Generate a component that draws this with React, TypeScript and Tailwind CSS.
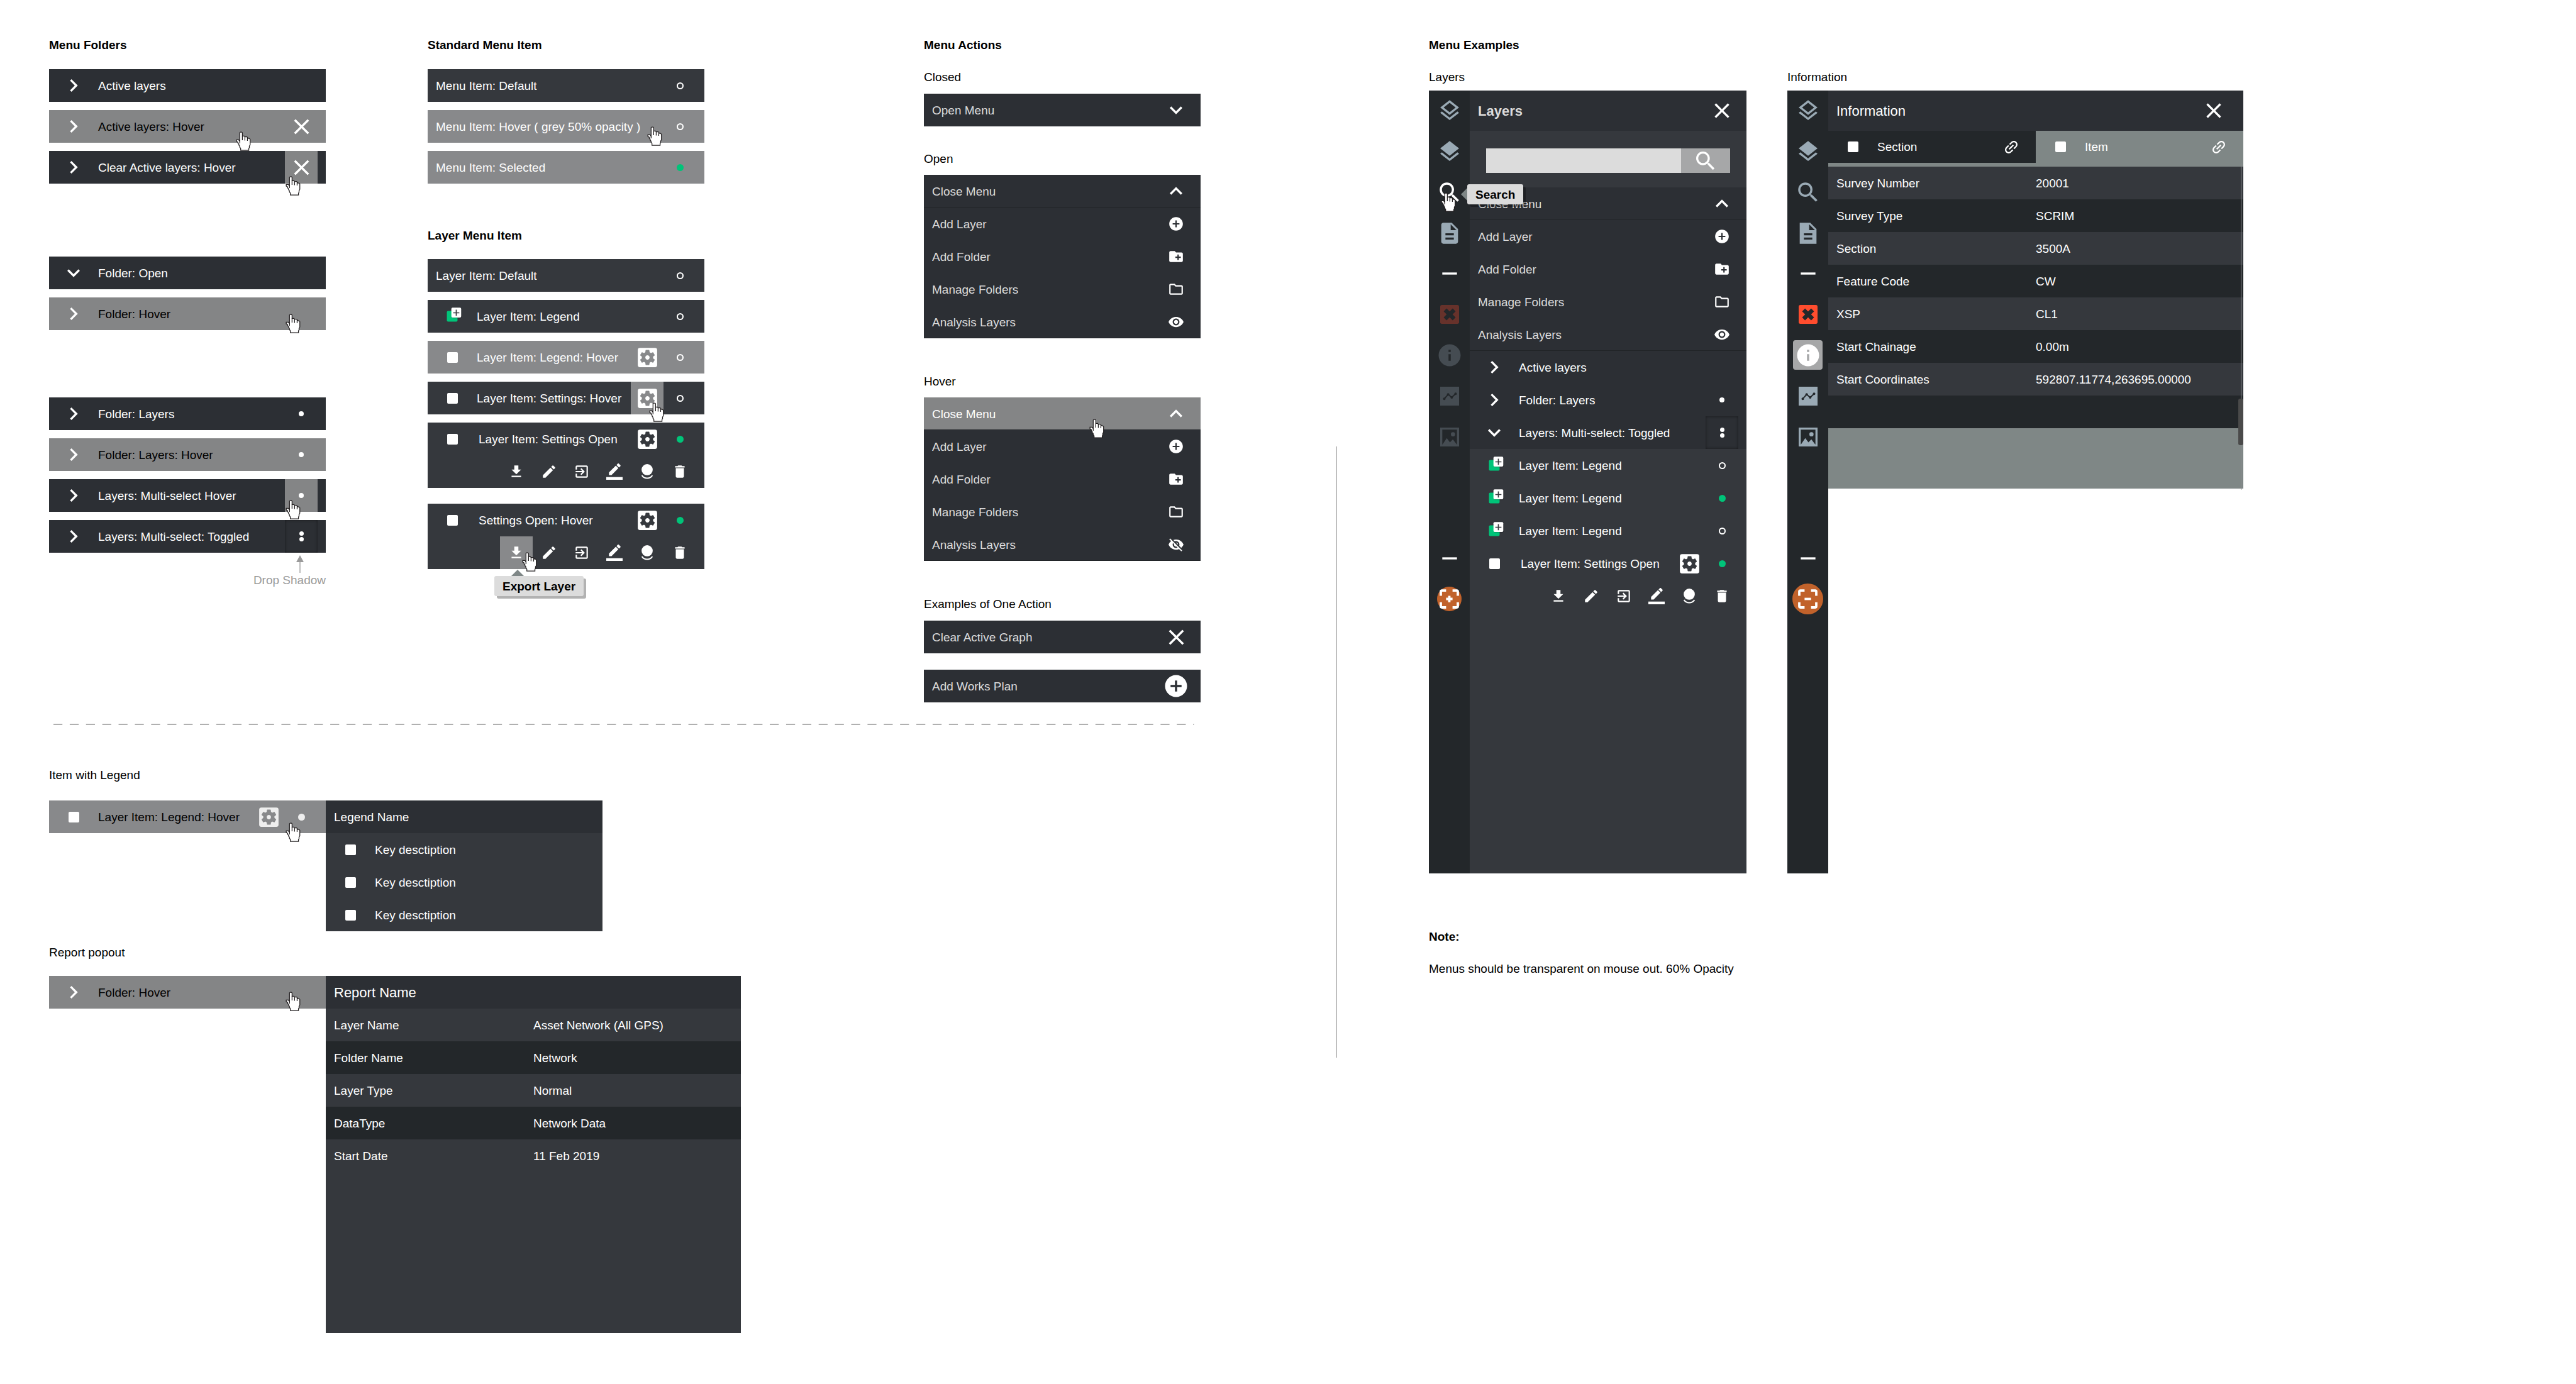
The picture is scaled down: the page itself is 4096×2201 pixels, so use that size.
import React from "react";
import type { ReactNode } from "react";
import {
  MdAddCircle,
  MdChevronRight,
  MdClose,
  MdCreateNewFolder,
  MdDelete,
  MdDescription,
  MdEdit,
  MdExitToApp,
  MdExpandLess,
  MdExpandMore,
  MdFileDownload,
  MdInfo,
  MdLayers,
  MdLink,
  MdOutlineFolder,
  MdOutlineLayers,
  MdRemove,
  MdSearch,
  MdSettingsApplications,
  MdVisibility,
  MdVisibilityOff,
} from "react-icons/md";

/* ---------- drawings ---------- */

function HandCursor({ className }: { className: string }) {
  return (
    <svg aria-hidden="true" viewBox="0 0 19 24" className={`pointer-events-none absolute z-20 h-[31px] w-[24px] ${className}`}>
      <path
        d="M5 12V1.4L5.8.6h1.6l.8.8v4.2h2.4l.8.9h2.6l.8 1 .9 1h1.2L18 9.600v6.900l-1 1.800v1.800l-.7 1.200v2.200H6.100v-2.200l-1.200-1.800v-1.300l-1.100-1.200v-1.200l-1.100-1.100v-1.200L.9 12.300v-1.900h2.700z"
        fill="#fff"
        stroke="#221f20"
        strokeWidth="1"
      />
      <path d="M8.200 5.600v5.200M11.400 6.500v4.700M14.600 7.500v4.200M5 11.500v3.300" fill="none" stroke="#221f20" strokeWidth="1" />
    </svg>
  );
}

function LegendGlyph() {
  return (
    <svg aria-hidden="true" viewBox="0 0 80 80" className="size-[52px]">
      <rect x="27" y="27" width="26" height="26" rx="3" fill="#00c479" />
      <rect x="39" y="21" width="24" height="24" rx="3" fill="#000" opacity=".18" />
      <rect x="38" y="19" width="24" height="24" rx="3" fill="#fff" />
      <path d="M50 24v15M42.500 31.500h15" stroke="#35383d" strokeWidth="2.600" />
    </svg>
  );
}

function BorderColorGlyph() {
  return (
    <svg aria-hidden="true" viewBox="0 0 24 24" fill="currentColor" className="size-[26px]">
      <path d="M17.750 7L14 3.250l-10 10V17h3.750l10-10zm2.960-2.960c.39-.39.39-1.020 0-1.410L18.370.29c-.39-.39-1.020-.39-1.410 0L15 2.250 18.750 6l1.960-1.960z" />
      <path d="M0 20h24v4H0z" />
    </svg>
  );
}

function OpacityGlyph() {
  return (
    <svg aria-hidden="true" viewBox="0 0 24 24" className="size-[26px]">
      <circle cx="12" cy="9.200" r="8.200" fill="currentColor" />
      <path d="M4.300 17.500a9.100 9.100 0 0 0 15.400 0" fill="none" stroke="currentColor" strokeWidth="1.900" />
    </svg>
  );
}

function ClearGlyph() {
  return (
    <svg aria-hidden="true" viewBox="0 0 24 24" className="size-10">
      <rect x="3" y="3" width="18" height="18" rx="1.600" fill="currentColor" />
      <path d="M7.700 7.700l8.600 8.600M16.300 7.700l-8.600 8.600" stroke="#23272a" strokeWidth="3.900" />
    </svg>
  );
}

function ChartGlyph() {
  return (
    <svg aria-hidden="true" viewBox="0 0 24 24" className="size-10">
      <path d="M3 3h18v18H3z" fill="currentColor" />
      <path d="M6.900 14.500l3.700-4.100 3.400 2.800 3.700-3.500" fill="none" stroke="#23272a" strokeWidth="1.200" />
      <g fill="#23272a">
        <circle cx="6.900" cy="14.500" r="1.200" />
        <circle cx="10.600" cy="10.400" r="1.200" />
        <circle cx="14" cy="13.200" r="1.200" />
        <circle cx="17.700" cy="9.700" r="1.200" />
      </g>
    </svg>
  );
}

function PictureGlyph() {
  return (
    <svg aria-hidden="true" viewBox="0 0 24 24" className="size-10">
      <path d="M4 4h16v16H4z" fill="none" stroke="currentColor" strokeWidth="2" />
      <path d="M5 19.300l4.300-6.200 3 4 2.800-2.800 3.900 5z" fill="currentColor" />
      <circle cx="15.200" cy="9.400" r="2" fill="currentColor" />
    </svg>
  );
}

function SquareDocGlyph() {
  return (
    <svg aria-hidden="true" viewBox="0 0 24 24" fill="currentColor" className="size-10">
      <path fillRule="evenodd" d="M4 2h10l6 6v14H4zM13 3.500V9h5.500zM8 12v2h8v-2zM8 16v2h8v-2z" />
    </svg>
  );
}

function FocusGlyph({ add }: { add: boolean }) {
  return (
    <svg aria-hidden="true" viewBox="0 0 24 24" fill="none" stroke="#fff" strokeWidth="2.200" className="size-[41px]">
      <path d="M9 4.100H5.100a1 1 0 0 0-1 1V9M15 4.100h3.900a1 1 0 0 1 1 1V9M9 19.900H5.100a1 1 0 0 1-1-1V15M15 19.900h3.900a1 1 0 0 0 1-1V15" />
      <path d={add ? "M9 12h6M12 9v6" : "M9 12h6"} />
    </svg>
  );
}

/* ---------- small parts ---------- */

function Heading({ children, className = "" }: { children: ReactNode; className?: string }) {
  return <h2 className={`text-[19px] leading-6 font-bold ${className}`}>{children}</h2>;
}

function Caption({ children, className = "" }: { children: ReactNode; className?: string }) {
  return <h3 className={`text-[19px] leading-6 ${className}`}>{children}</h3>;
}

function Ring() {
  return <span className="size-[11px] rounded-full border-2 border-white" />;
}

function GreenDot() {
  return <span className="size-[11px] rounded-full bg-[#00c479]" />;
}

function Dot() {
  return <span className="size-2 rounded-full bg-white" />;
}

function TwoDots() {
  return (
    <span className="flex flex-col gap-[2px]">
      <span className="size-[7px] rounded-full bg-white" />
      <span className="size-[7px] rounded-full bg-white" />
    </span>
  );
}

function Swatch({ label }: { label: string }) {
  return (
    <span className="flex size-[52px] shrink-0 items-center justify-center">
      <input type="checkbox" aria-label={label} className="size-[17px] appearance-none rounded-[2px] bg-white" />
    </span>
  );
}

function Tooltip({ children }: { children: ReactNode }) {
  return (
    <div role="tooltip" className="flex h-8 items-center rounded-[3px] bg-[#dcdcdc] px-[13px] pt-[2px] text-[19px] font-bold whitespace-nowrap text-black shadow-[4px_4px_0_rgba(0,0,0,0.3)]">
      {children}
    </div>
  );
}

/* ---------- menu rows ---------- */

type FolderRowProps = {
  label: string;
  open?: boolean;
  hover?: boolean;
  end?: ReactNode;
  endName?: string;
  endState?: "idle" | "hover" | "pressed";
  children?: ReactNode;
};

function FolderRow({ label, open, hover, end, endName, endState = "idle", children }: FolderRowProps) {
  const endLook = {
    idle: "",
    hover: "bg-[#848586]",
    pressed: "shadow-[inset_0_0_4px_rgba(0,0,0,0.5)]",
  }[endState];
  return (
    <div className={`relative flex h-[52px] w-full items-center text-[19px] ${hover ? "bg-[#848586]" : "bg-[#2c2f34]"}`}>
      <button type="button" aria-expanded={!!open} className="flex h-full min-w-0 flex-1 items-center pl-[13px] text-left">
        <span className="flex w-[52px] justify-center text-white">
          {open ? <MdExpandMore className="size-10" /> : <MdChevronRight className="size-10" />}
        </span>
        <span className={`pt-[2px] pl-[13px] whitespace-nowrap ${hover ? "text-black" : "text-white"}`}>{label}</span>
      </button>
      {end && (
        <button type="button" aria-label={endName} className={`mr-[13px] flex size-[52px] items-center justify-center text-white ${endLook}`}>
          {end}
        </button>
      )}
      {children}
    </div>
  );
}

type ItemRowProps = {
  label: string;
  tone?: "base" | "hover";
  dark?: boolean;
  inset?: boolean;
  lead?: ReactNode;
  gear?: "plain" | "hover" | "soft";
  state: ReactNode;
  children?: ReactNode;
};

function ItemRow({ label, tone = "base", dark, inset, lead, gear, state, children }: ItemRowProps) {
  return (
    <div className={`relative flex h-[52px] w-full items-center pl-[13px] text-[19px] ${tone === "hover" ? "bg-[#88898b]" : "bg-[#35383d]"}`}>
      {lead && <span className="mr-[13px] flex size-[52px] shrink-0 items-center justify-center">{lead}</span>}
      <span className={`flex-1 pt-[2px] whitespace-nowrap ${dark ? "text-black" : "text-white"} ${inset ? "pl-[3px]" : ""}`}>{label}</span>
      {gear && (
        <button
          type="button"
          aria-label={`${label} settings`}
          className={`flex size-[52px] items-center justify-center ${gear === "hover" ? "bg-[#88898b]" : ""} ${gear === "soft" ? "text-[#eeeeee]" : "text-white"}`}
        >
          <MdSettingsApplications className="size-[41px]" />
        </button>
      )}
      <button type="button" aria-label={`Select ${label}`} className="mr-[13px] flex size-[52px] items-center justify-center">
        {state}
      </button>
      {children}
    </div>
  );
}

function ToolRow({ exportHover }: { exportHover?: boolean }) {
  const cell = "flex size-[52px] items-center justify-center";
  return (
    <div className="flex w-full justify-end bg-[#35383d] pr-[13px] text-white">
      <button type="button" aria-label="Export Layer" className={`${cell} ${exportHover ? "bg-[#88898b]" : ""}`}>
        <MdFileDownload className="size-[26px]" />
      </button>
      <button type="button" aria-label="Edit Layer" className={cell}>
        <MdEdit className="size-[26px]" />
      </button>
      <button type="button" aria-label="Move Layer" className={cell}>
        <MdExitToApp className="size-[26px]" />
      </button>
      <button type="button" aria-label="Layer Colour" className={cell}>
        <BorderColorGlyph />
      </button>
      <button type="button" aria-label="Layer Opacity" className={cell}>
        <OpacityGlyph />
      </button>
      <button type="button" aria-label="Delete Layer" className={cell}>
        <MdDelete className="size-[26px]" />
      </button>
    </div>
  );
}

type ActionRowProps = {
  label: string;
  icon: ReactNode;
  edge?: "top" | "bottom";
  hover?: boolean;
  children?: ReactNode;
};

function ActionRow({ label, icon, edge, hover, children }: ActionRowProps) {
  const line = {
    none: "",
    top: "shadow-[inset_0_1px_0_#212427]",
    bottom: "shadow-[inset_0_-1px_0_#212427]",
  }[edge ?? "none"];
  return (
    <button
      type="button"
      className={`relative flex h-[52px] w-full items-center justify-between pr-[13px] pl-[13px] text-left text-[19px] ${line} ${hover ? "bg-[#848586] text-white" : "bg-[#2c2f34] text-[#dcdcdc]"}`}
    >
      <span className="pt-[2px]">{label}</span>
      <span className="flex w-[52px] justify-center text-white">{icon}</span>
      {children}
    </button>
  );
}

function ActionMenu({ hover, hidden, children }: { hover?: boolean; hidden?: boolean; children?: ReactNode }) {
  return (
    <div className="w-full">
      <ActionRow label="Close Menu" icon={<MdExpandLess className="size-10" />} edge="bottom" hover={hover}>
        {children}
      </ActionRow>
      <ActionRow label="Add Layer" icon={<MdAddCircle className="size-[26px]" />} />
      <ActionRow label="Add Folder" icon={<MdCreateNewFolder className="size-[26px]" />} />
      <ActionRow label="Manage Folders" icon={<MdOutlineFolder className="size-[26px]" />} />
      <ActionRow
        label="Analysis Layers"
        icon={hidden ? <MdVisibilityOff className="size-[26px]" /> : <MdVisibility className="size-[26px]" />}
        edge="bottom"
      />
    </div>
  );
}

function PropertyTable({ rows }: { rows: [string, string][] }) {
  return (
    <table className="w-full table-fixed border-collapse text-left text-[19px] text-white">
      <tbody>
        {rows.map(([name, value], i) => (
          <tr key={i} className="h-[52px] odd:bg-[#35383d] even:bg-[#23272a]">
            <th scope="row" className="pt-[2px] pl-[13px] font-normal">
              {name}
            </th>
            <td className="pt-[2px]">{value}</td>
          </tr>
        ))}
      </tbody>
    </table>
  );
}

function PanelTitle({ children, bold }: { children: ReactNode; bold?: boolean }) {
  return (
    <div className={`flex h-16 items-center justify-between bg-[#2c2f34] pl-[13px] ${bold ? "pr-[13px]" : "pr-[21px]"}`}>
      <h4 className={`text-[22px] ${bold ? "font-bold text-[#dcdcdc]" : "text-white"}`}>{children}</h4>
      <button type="button" aria-label="Close" className="flex size-[52px] items-center justify-center text-white">
        <MdClose className="size-10" />
      </button>
    </div>
  );
}

/* ---------- side bar ---------- */

function SideBar({ variant }: { variant: "layers" | "info" }) {
  const info = variant === "info";
  const slot = "flex h-[65px] w-full items-center justify-center";
  const quiet = info ? "text-[#9aaab5]" : "text-[#454c52]";
  return (
    <nav aria-label="Tools" className="flex min-h-[1245px] w-[65px] shrink-0 flex-col bg-[#23272a] text-[#9aaab5]">
      <button type="button" aria-label="Base layers" className="flex h-16 w-full items-center justify-center">
        <MdOutlineLayers className="size-10" />
      </button>
      <button type="button" aria-label="Layers" className={slot}>
        <MdLayers className="size-10" />
      </button>
      <button type="button" aria-label="Search" className={`${slot} ${info ? "" : "text-white"}`}>
        <MdSearch className="size-[42px]" />
      </button>
      <button type="button" aria-label="Reports" className={slot}>
        {info ? <SquareDocGlyph /> : <MdDescription className="size-10" />}
      </button>
      <div className="flex h-16 items-center justify-center text-white">
        <MdRemove className="size-10" />
      </div>
      <button type="button" aria-label="Clear" className={`${slot} ${info ? "text-[#ff4d2e]" : "text-[#67322b]"}`}>
        <ClearGlyph />
      </button>
      <button type="button" aria-label="Information" className={`${slot} ${info ? "text-white" : "text-[#454c52]"}`}>
        <span className={`flex size-[47px] items-center justify-center rounded ${info ? "bg-[#a6a7a8]" : ""}`}>
          <MdInfo className="size-[42px]" />
        </span>
      </button>
      <button type="button" aria-label="Graph" className={`${slot} ${quiet}`}>
        <ChartGlyph />
      </button>
      <button type="button" aria-label="Images" className={`${slot} ${quiet}`}>
        <PictureGlyph />
      </button>
      <div className="mt-[129px] flex h-16 items-center justify-center text-white">
        <MdRemove className="size-10" />
      </div>
      <button type="button" aria-label="Focus" className={slot}>
        <span className={`flex shrink-0 items-center justify-center rounded-full bg-[#c1622b] ${info ? "size-[49px]" : "size-[39px]"}`}>
          <span className="shrink-0">
            <FocusGlyph add={!info} />
          </span>
        </span>
      </button>
    </nav>
  );
}

/* ---------- columns ---------- */

function FolderColumn() {
  const cross = <MdClose className="size-[41px]" />;
  return (
    <section className="w-full max-w-[440px]">
      <Heading>Menu Folders</Heading>
      <div className="mt-[26px] flex flex-col gap-[13px]">
        <FolderRow label="Active layers" />
        <FolderRow label="Active layers: Hover" hover end={cross} endName="Clear active layers">
          <HandCursor className="top-[34px] left-[297px]" />
        </FolderRow>
        <FolderRow label="Clear Active layers: Hover" end={cross} endName="Clear active layers" endState="hover">
          <HandCursor className="top-[40px] left-[376px]" />
        </FolderRow>
      </div>
      <div className="mt-[116px] flex flex-col gap-[13px]">
        <FolderRow label="Folder: Open" open />
        <FolderRow label="Folder: Hover" hover>
          <HandCursor className="top-[26px] left-[376px]" />
        </FolderRow>
      </div>
      <div className="mt-[107px] flex flex-col gap-[13px]">
        <FolderRow label="Folder: Layers" end={<Dot />} endName="Select layers" />
        <FolderRow label="Folder: Layers: Hover" hover end={<Dot />} endName="Select layers" />
        <FolderRow label="Layers: Multi-select Hover" end={<Dot />} endName="Multi-select" endState="hover">
          <HandCursor className="top-[33px] left-[376px]" />
        </FolderRow>
        <FolderRow label="Layers: Multi-select: Toggled" end={<TwoDots />} endName="Multi-select" endState="pressed" />
      </div>
      <div className="mt-1 flex flex-col items-end text-[#9a9a9a]">
        <svg aria-hidden="true" viewBox="0 0 12 28" className="mr-[35px] h-7 w-3">
          <path d="M6 0l6 11H0z" fill="currentColor" />
          <path d="M6 10v18" stroke="currentColor" strokeWidth="1.300" />
        </svg>
        <p className="text-[19px] leading-6">Drop Shadow</p>
      </div>
    </section>
  );
}

function ItemColumn() {
  return (
    <section className="w-full max-w-[440px]">
      <Heading>Standard Menu Item</Heading>
      <div className="mt-[26px] flex flex-col gap-[13px]">
        <ItemRow label="Menu Item: Default" state={<Ring />} />
        <ItemRow label="Menu Item: Hover ( grey 50% opacity )" tone="hover" state={<Ring />}>
          <HandCursor className="top-[26px] left-[349px]" />
        </ItemRow>
        <ItemRow label="Menu Item: Selected" tone="hover" state={<GreenDot />} />
      </div>
      <Heading className="mt-[71px]">Layer Menu Item</Heading>
      <div className="mt-[25px] flex flex-col gap-[13px]">
        <ItemRow label="Layer Item: Default" state={<Ring />} />
        <ItemRow label="Layer Item: Legend" lead={<LegendGlyph />} state={<Ring />} />
        <ItemRow label="Layer Item: Legend: Hover" tone="hover" lead={<Swatch label="Show legend" />} gear="plain" state={<Ring />} />
        <ItemRow label="Layer Item: Settings: Hover" lead={<Swatch label="Show layer" />} gear="hover" state={<Ring />}>
          <HandCursor className="top-[33px] left-[352px]" />
        </ItemRow>
        <div>
          <ItemRow label="Layer Item: Settings Open" inset lead={<Swatch label="Show layer" />} gear="plain" state={<GreenDot />} />
          <ToolRow />
        </div>
      </div>
      <div className="relative mt-[25px]">
        <ItemRow label="Settings Open: Hover" inset lead={<Swatch label="Show layer" />} gear="plain" state={<GreenDot />} />
        <ToolRow exportHover />
        <HandCursor className="top-[77px] left-[150px]" />
        <div className="absolute top-[105px] left-[106px]">
          <svg aria-hidden="true" viewBox="0 0 20 10" className="ml-[27px] h-[10px] w-5">
            <path d="M10 0l10 10H0z" fill="#7f8787" />
          </svg>
          <Tooltip>Export Layer</Tooltip>
        </div>
      </div>
    </section>
  );
}

function ActionColumn() {
  return (
    <section className="w-full max-w-[440px]">
      <Heading>Menu Actions</Heading>
      <Caption className="mt-[27px]">Closed</Caption>
      <div className="mt-[14px]">
        <ActionRow label="Open Menu" icon={<MdExpandMore className="size-10" />} edge="top" />
      </div>
      <Caption className="mt-10">Open</Caption>
      <div className="mt-[13px]">
        <ActionMenu />
      </div>
      <Caption className="mt-[57px]">Hover</Caption>
      <div className="mt-[13px]">
        <ActionMenu hover hidden>
          <HandCursor className="top-[34px] left-[263px]" />
        </ActionMenu>
      </div>
      <Caption className="mt-[57px]">Examples of One Action</Caption>
      <div className="mt-[14px] flex flex-col gap-[26px]">
        <ActionRow label="Clear Active Graph" icon={<MdClose className="size-[41px]" />} edge="top" />
        <ActionRow label="Add Works Plan" icon={<MdAddCircle className="size-[42px]" />} edge="bottom" />
      </div>
    </section>
  );
}

function Popouts() {
  return (
    <section>
      <Caption className="mt-[68px]">Item with Legend</Caption>
      <div className="mt-7 flex items-start">
        <div className="max-w-[440px] flex-1">
          <ItemRow
            label="Layer Item: Legend: Hover"
            tone="hover"
            dark
            lead={<Swatch label="Show legend" />}
            gear="soft"
            state={<span className="size-[11px] rounded-full bg-[#eeeeee]" />}
          >
            <HandCursor className="top-[35px] left-[376px]" />
          </ItemRow>
        </div>
        <div className="max-w-[440px] flex-1 bg-[#35383d] text-[19px] text-white">
          <h4 className="flex h-[52px] items-center bg-[#2c2f34] pt-[2px] pl-[13px]">Legend Name</h4>
          {[1, 2, 3].map((n) => (
            <div key={n} className="flex h-[52px] items-center pl-[13px]">
              <Swatch label={`Key ${n}`} />
              <span className="pt-[2px] pl-[13px]">Key desctiption</span>
            </div>
          ))}
        </div>
      </div>
      <Caption className="mt-[22px]">Report popout</Caption>
      <div className="mt-[25px] flex items-start">
        <div className="max-w-[440px] flex-1">
          <FolderRow label="Folder: Hover" hover>
            <HandCursor className="top-[25px] left-[376px]" />
          </FolderRow>
        </div>
        <div className="min-h-[568px] max-w-[660px] flex-1 bg-[#35383d]">
          <h4 className="flex h-[52px] items-center bg-[#2c2f34] pl-[13px] text-[22px] text-white">Report Name</h4>
          <PropertyTable
            rows={[
              ["Layer Name", "Asset Network (All GPS)"],
              ["Folder Name", "Network"],
              ["Layer Type", "Normal"],
              ["DataType", "Network Data"],
              ["Start Date", "11 Feb 2019"],
            ]}
          />
        </div>
      </div>
    </section>
  );
}

function LayersExample() {
  return (
    <div className="max-w-[505px] flex-1">
      <Caption>Layers</Caption>
      <div className="relative mt-[9px] flex">
        <SideBar variant="layers" />
        <div className="min-w-0 flex-1 bg-[#35383d]">
          <PanelTitle bold>Layers</PanelTitle>
          <form role="search" className="flex px-[26px] pt-7 pb-[23px]">
            <input type="search" aria-label="Search layers" className="h-[39px] min-w-0 flex-1 appearance-none bg-[#dcdcdc] px-3 text-[19px]" />
            <button type="button" aria-label="Search" className="flex h-[39px] w-[78px] items-center justify-center bg-[#a6a7a8] text-white">
              <MdSearch className="size-10" />
            </button>
          </form>
          <ActionMenu />
          <FolderRow label="Active layers" />
          <FolderRow label="Folder: Layers" end={<Dot />} endName="Select layers" />
          <FolderRow label="Layers: Multi-select: Toggled" open end={<TwoDots />} endName="Multi-select" endState="pressed" />
          <ItemRow label="Layer Item: Legend" lead={<LegendGlyph />} state={<Ring />} />
          <ItemRow label="Layer Item: Legend" lead={<LegendGlyph />} state={<GreenDot />} />
          <ItemRow label="Layer Item: Legend" lead={<LegendGlyph />} state={<Ring />} />
          <ItemRow label="Layer Item: Settings Open" inset lead={<Swatch label="Show layer" />} gear="plain" state={<GreenDot />} />
          <ToolRow />
        </div>
        <HandCursor className="top-[162px] left-[19px]" />
        <div className="absolute top-[149px] left-[51px] flex items-center">
          <svg aria-hidden="true" viewBox="0 0 10 20" className="h-5 w-[10px]">
            <path d="M0 10L10 0v20z" fill="#7f8787" />
          </svg>
          <Tooltip>Search</Tooltip>
        </div>
      </div>
    </div>
  );
}

function Tab({ label, selected }: { label: string; selected?: boolean }) {
  return (
    <div className={`flex h-[51px] flex-1 items-center justify-between pr-[13px] pl-[13px] text-[19px] text-white ${selected ? "bg-[#7f8786]" : "bg-[#23272a]"}`}>
      <label className="flex items-center">
        <Swatch label={label} />
        <span className="pt-[2px] pl-[13px]">{label}</span>
      </label>
      <a href={selected ? "#item" : "#section"} aria-label={`Link to ${label}`} className="flex w-[52px] justify-center">
        <MdLink className="size-7 -rotate-45" />
      </a>
    </div>
  );
}

function InformationExample() {
  return (
    <div className="max-w-[725px] flex-1">
      <Caption>Information</Caption>
      <div className="mt-[9px] flex items-start">
        <SideBar variant="info" />
        <div className="relative min-w-0 flex-1 bg-[#7f8786] pb-24">
          <PanelTitle>Information</PanelTitle>
          <div className="flex pb-[6px]">
            <Tab label="Section" />
            <Tab label="Item" selected />
          </div>
          <PropertyTable
            rows={[
              ["Survey Number", "20001"],
              ["Survey Type", "SCRIM"],
              ["Section", "3500A"],
              ["Feature Code", "CW"],
              ["XSP", "CL1"],
              ["Start Chainage", "0.00m"],
              ["Start Coordinates", "592807.11774,263695.00000"],
              ["", ""],
            ]}
          />
          <div aria-hidden="true" className="absolute top-[116px] right-[3px] -bottom-[2px] w-px bg-[#8a8d8f]" />
          <div aria-hidden="true" className="absolute top-[490px] right-0 h-[74px] w-2 rounded-[3px] bg-[#4a4a4a]" />
        </div>
      </div>
    </div>
  );
}

export default function App() {
  return (
    <main className="grid min-h-screen grid-cols-[2047fr_1px_1970fr] overflow-hidden bg-white pt-[60px] pl-[78px] font-['Liberation_Sans',Arial,sans-serif] text-black">
      <div>
        <div className="grid grid-cols-[602fr_789fr_656fr]">
          <FolderColumn />
          <ItemColumn />
          <ActionColumn />
        </div>
        <svg aria-hidden="true" viewBox="0 0 2815 3" preserveAspectRatio="none" className="mt-[34px] ml-[7px] h-[2px] w-[89%]">
          <path d="M0 1.500h2802" stroke="#979797" strokeWidth="2.200" strokeDasharray="22 18" />
        </svg>
        <Popouts />
      </div>
      <div className="mt-[650px] h-[972px] bg-[#979797]" />
      <div className="pl-[146px]">
        <Heading>Menu Examples</Heading>
        <div className="mt-[27px] flex items-start gap-[65px]">
          <LayersExample />
          <InformationExample />
        </div>
        <Heading className="mt-[89px]">Note:</Heading>
        <p className="mt-[27px] text-[19px] leading-6">Menus should be transparent on mouse out. 60% Opacity</p>
      </div>
    </main>
  );
}
